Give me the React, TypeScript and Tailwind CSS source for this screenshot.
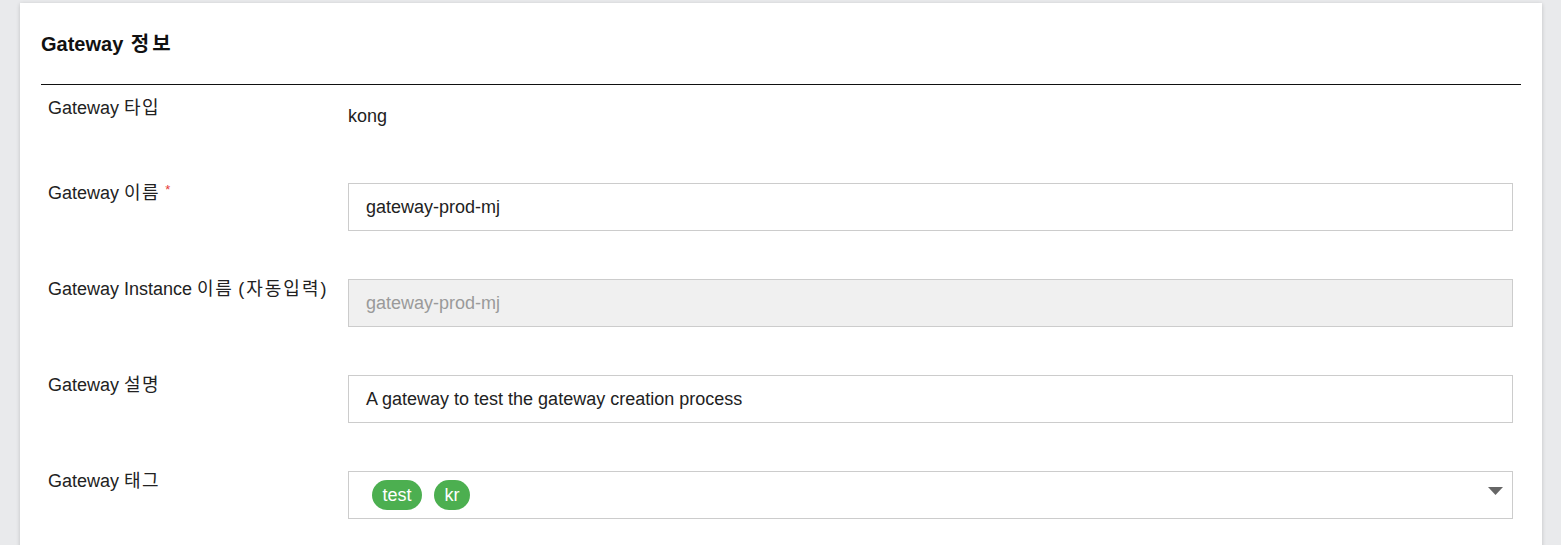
import React from "react";

const font = {
  fontFamily: '"Liberation Sans", Arial, "Noto Sans CJK KR", sans-serif',
};

function K({ children, className = "tracking-[1.5px]" }: { children: React.ReactNode; className?: string }) {
  return <span className={className}>{children}</span>;
}

function Label({ children, required }: { children: React.ReactNode; required?: boolean }) {
  return (
    <div className="w-[307px] shrink-0 pl-[7px] text-[18px] leading-[24px] text-[#222]">
      {children}
      {required && (
        <span className="ml-[5px] align-top text-[13px] leading-[18px] text-[#e53935]">*</span>
      )}
    </div>
  );
}

function Input({ value, disabled }: { value: string; disabled?: boolean }) {
  return (
    <div
      className={`mt-[2px] flex h-[48px] w-[1165px] items-center border border-[#cccccc] pl-[17px] text-[18px] ${
        disabled ? "bg-[#f0f0f0] text-[#9a9a9a]" : "bg-white text-[#222]"
      }`}
    >
      {value}
    </div>
  );
}

function Chip({ text }: { text: string }) {
  return (
    <span className="flex h-[30px] items-center rounded-full bg-[#4caf50] px-[10.5px] text-[18px] text-white">
      {text}
    </span>
  );
}

export default function App() {
  return (
    <div className="min-h-[545px] w-full bg-[#e9eaec] pt-[3px]" style={font}>
      <div className="ml-[20px] w-[1522px] bg-white px-[21px] pb-[40px] pt-[27px] shadow-[0_1px_4px_rgba(0,0,0,0.18)]">
        <h2 className="text-[20px] font-bold leading-[28px] text-[#111]">
          Gateway <span className="ml-[2px] tracking-[3px]">정보</span>
        </h2>
        <div className="mt-[26px] h-px w-full bg-[#111]" />
        <div className="flex flex-col gap-[46px] pt-[11px]">
          <div className="flex h-[39px] items-start">
            <Label>
              Gateway <K>타입</K>
            </Label>
            <div className="mt-[8px] text-[18px] leading-[24px] text-[#222]">kong</div>
          </div>
          <div className="flex items-start">
            <Label required>
              Gateway <K>이름</K>
            </Label>
            <Input value="gateway-prod-mj" />
          </div>
          <div className="flex items-start">
            <Label>
              Gateway Instance <K>이름</K> <K className="tracking-[2px]">(자동입력)</K>
            </Label>
            <Input value="gateway-prod-mj" disabled />
          </div>
          <div className="flex items-start">
            <Label>
              Gateway <K>설명</K>
            </Label>
            <Input value="A gateway to test the gateway creation process" />
          </div>
          <div className="flex items-start">
            <Label>
              Gateway <K>태그</K>
            </Label>
            <div className="mt-[2px] flex h-[48px] w-[1165px] items-center border border-[#cccccc] bg-white pl-[23px] pr-[9px]">
              <div className="flex flex-1 items-center gap-[12px]">
                <Chip text="test" />
                <Chip text="kr" />
              </div>
              <svg width="15" height="8" viewBox="0 0 15 8" className="mt-[-9px]">
                <path d="M0 0 L15 0 L7.5 8 Z" fill="#666" />
              </svg>
            </div>
          </div>
        </div>
      </div>
    </div>
  );
}
